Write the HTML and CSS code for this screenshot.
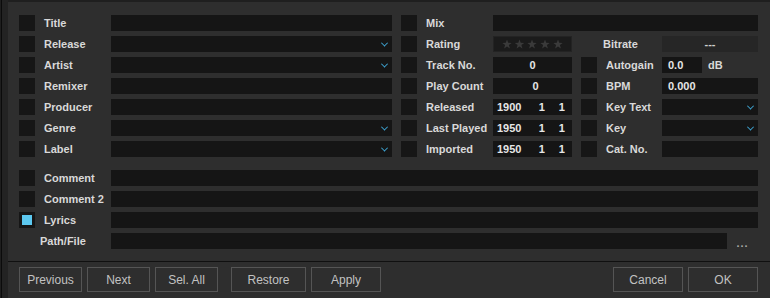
FILE: index.html
```html
<!DOCTYPE html>
<html lang="en">
<head>
    <meta charset="UTF-8">
    <title>Edit Track</title>
    <link rel="stylesheet" href="styles.css">
</head>
<body>
    <div class="panel">
        <div class="editor">
            <div class="tags">
                <!-- row 1 -->
                <div class="check"></div>
                <div class="label">Title</div>
                <div class="field"></div>
                <div></div>
                <div class="check"></div>
                <div class="label">Mix</div>
                <div class="field wide"></div>

                <!-- row 2 -->
                <div class="check"></div>
                <div class="label">Release</div>
                <div class="field drop"><span class="chev"></span></div>
                <div></div>
                <div class="check"></div>
                <div class="label">Rating</div>
                <div class="rating">
                    <svg width="79" height="16" viewBox="0 0 79 16">
                        <g fill="#3a3a3a">
                            <polygon points="14,3.5 15.2,6.8 18.7,6.9 15.9,9 16.9,12.4 14,10.4 11.1,12.4 12.1,9 9.3,6.9 12.8,6.8"/>
                            <polygon points="26.5,3.5 27.7,6.8 31.2,6.9 28.4,9 29.4,12.4 26.5,10.4 23.6,12.4 24.6,9 21.8,6.9 25.3,6.8"/>
                            <polygon points="39,3.5 40.2,6.8 43.7,6.9 40.9,9 41.9,12.4 39,10.4 36.1,12.4 37.1,9 34.3,6.9 37.8,6.8"/>
                            <polygon points="52,3.5 53.2,6.8 56.7,6.9 53.9,9 54.9,12.4 52,10.4 49.1,12.4 50.1,9 47.3,6.9 50.8,6.8"/>
                            <polygon points="65,3.5 66.2,6.8 69.7,6.9 66.9,9 67.9,12.4 65,10.4 62.1,12.4 63.1,9 60.3,6.9 63.8,6.8"/>
                        </g>
                    </svg>
                </div>
                <div></div>
                <div></div>
                <div class="label short">Bitrate</div>
                <div class="field grey center">---</div>

                <!-- row 3 -->
                <div class="check"></div>
                <div class="label">Artist</div>
                <div class="field drop"><span class="chev"></span></div>
                <div></div>
                <div class="check"></div>
                <div class="label">Track No.</div>
                <div class="field center">0</div>
                <div></div>
                <div class="check"></div>
                <div class="label">Autogain</div>
                <div class="gain">
                    <div class="field value">0.0</div>
                    <span class="unit">dB</span>
                </div>

                <!-- row 4 -->
                <div class="check"></div>
                <div class="label">Remixer</div>
                <div class="field"></div>
                <div></div>
                <div class="check"></div>
                <div class="label">Play Count</div>
                <div class="field center count">0</div>
                <div></div>
                <div class="check"></div>
                <div class="label">BPM</div>
                <div class="field value">0.000</div>

                <!-- row 5 -->
                <div class="check"></div>
                <div class="label">Producer</div>
                <div class="field"></div>
                <div></div>
                <div class="check"></div>
                <div class="label">Released</div>
                <div class="field date"><span class="year">1900</span><span class="part">1</span><span class="part">1</span></div>
                <div></div>
                <div class="check"></div>
                <div class="label">Key Text</div>
                <div class="field drop"><span class="chev"></span></div>

                <!-- row 6 -->
                <div class="check"></div>
                <div class="label">Genre</div>
                <div class="field drop"><span class="chev"></span></div>
                <div></div>
                <div class="check"></div>
                <div class="label">Last Played</div>
                <div class="field date"><span class="year">1950</span><span class="part">1</span><span class="part">1</span></div>
                <div></div>
                <div class="check"></div>
                <div class="label">Key</div>
                <div class="field drop"><span class="chev"></span></div>

                <!-- row 7 -->
                <div class="check"></div>
                <div class="label">Label</div>
                <div class="field drop"><span class="chev"></span></div>
                <div></div>
                <div class="check"></div>
                <div class="label">Imported</div>
                <div class="field date"><span class="year">1950</span><span class="part">1</span><span class="part">1</span></div>
                <div></div>
                <div class="check"></div>
                <div class="label">Cat. No.</div>
                <div class="field"></div>
            </div>

            <div class="notes">
                <div class="check"></div>
                <div class="label">Comment</div>
                <div class="field"></div>

                <div class="check"></div>
                <div class="label">Comment 2</div>
                <div class="field"></div>

                <div class="check on"></div>
                <div class="label">Lyrics</div>
                <div class="field"></div>

                <div></div>
                <div class="label path">Path/File</div>
                <div class="pathrow">
                    <div class="field"></div>
                    <span class="more">...</span>
                </div>
            </div>
        </div>

        <div class="actions">
            <button class="btn">Previous</button>
            <button class="btn">Next</button>
            <button class="btn">Sel. All</button>
            <button class="btn restore">Restore</button>
            <button class="btn apply">Apply</button>
            <button class="btn apply cancel">Cancel</button>
            <button class="btn apply">OK</button>
        </div>
    </div>
</body>
</html>
```

FILE: styles.css
```css
body{
    margin: 0;
    height: 298px;
    overflow: hidden;
    background: linear-gradient(to right, #1e1e1e 0 1px, #0b0b0b 1px 2px, #232323 2px 8px, #1f1f1f 8px);
    font-family: "Liberation Sans", Arial, Helvetica, sans-serif;
    font-size: 11px;
    font-weight: bold;
    color: #d9d9d9;
}
.panel{
    margin-left: 8px;
    margin-top: 2px;
    height: 296px;
    background-color: #2e2e2e;
}
.editor{
    padding: 13px 12px 12px 11px;
}
.tags{
    display: grid;
    grid-template-columns: 16px 76px 281px 9px 16px 76px 79px 9px 16px 65px 96px;
    grid-auto-rows: 16px;
    row-gap: 5px;
}
.notes{
    display: grid;
    grid-template-columns: 16px 76px 1fr;
    grid-auto-rows: 16px;
    row-gap: 5px;
    margin-top: 13px;
}
.check{
    background-color: #161616;
    position: relative;
}
.check.on::after{
    content: "";
    position: absolute;
    left: 3px;
    top: 3px;
    width: 10px;
    height: 10px;
    background-color: #5cc8ef;
}
.label{
    padding-left: 9px;
    line-height: 16px;
    white-space: nowrap;
}
.label.short{
    padding-left: 6px;
}
.label.path{
    padding-left: 5px;
}
.field{
    background-color: #151515;
    position: relative;
    line-height: 16px;
    color: #e6e6e6;
}
.field.wide{
    grid-column: 7 / 12;
}
.field.grey{
    background-color: #262626;
    color: #cfcfcf;
}
.center{
    text-align: center;
}
.count{
    padding-left: 6px;
}
.value{
    padding-left: 6px;
}
.chev{
    position: absolute;
    right: 5px;
    top: 6px;
    width: 4px;
    height: 4px;
    border-right: 1.5px solid #3fa9d9;
    border-bottom: 1.5px solid #3fa9d9;
    transform: rotate(45deg) translate(-1px, -1px);
}
.rating{
    background-color: #1b1b1b;
    box-shadow: inset 0 0 0 1px #232323;
}
.rating svg{
    display: block;
}
.gain{
    display: flex;
    align-items: center;
}
.gain .field{
    width: 34px;
    height: 16px;
}
.unit{
    margin-left: 6px;
}
.date{
    display: flex;
}
.year{
    margin-left: 4px;
    width: 36px;
}
.part{
    width: 21px;
    text-align: center;
}
.pathrow{
    display: flex;
}
.pathrow .field{
    flex: 1;
}
.more{
    width: 31px;
    text-align: center;
    color: #a8a8a8;
    line-height: 20px;
    letter-spacing: 1px;
}
.actions{
    border-top: 1px solid #101010;
    padding: 5px 12px 0 11px;
    display: flex;
    gap: 5px;
}
.btn{
    width: 63px;
    height: 25px;
    padding: 0;
    background-color: #2e2e2e;
    border: 1px solid #555;
    color: #c2c2c2;
    font-family: "Liberation Sans", Arial, Helvetica, sans-serif;
    font-size: 12px;
    font-weight: normal;
}
.restore{
    width: 75px;
    margin-left: 8px;
}
.apply{
    width: 70px;
}
.cancel{
    margin-left: auto;
}
```
